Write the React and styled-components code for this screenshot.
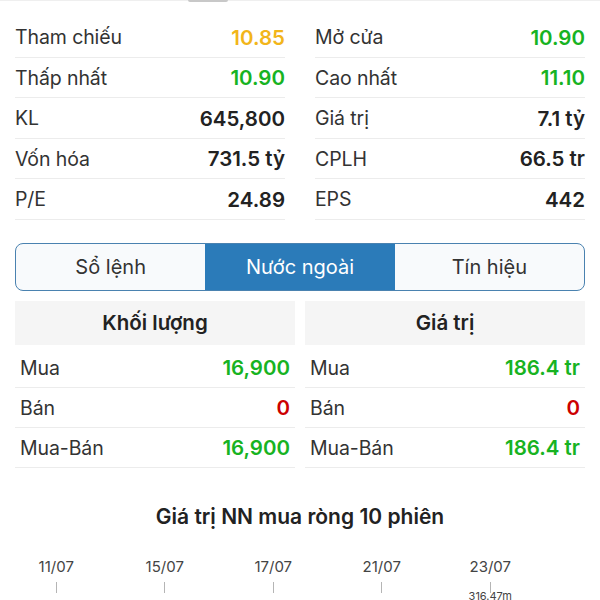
import React from "react";
import styled, { createGlobalStyle } from "styled-components";

const GlobalStyle = createGlobalStyle`
    body {
        margin: 0;
        background: #fff;
        font-family: Inter, "Noto Sans", sans-serif;
        color: #333;
    }
`;

const stats = [
    ["Tham chiếu", "10.85", "ref", "Mở cửa", "10.90", "up"],
    ["Thấp nhất", "10.90", "up", "Cao nhất", "11.10", "up"],
    ["KL", "645,800", "", "Giá trị", "7.1 tỷ", ""],
    ["Vốn hóa", "731.5 tỷ", "", "CPLH", "66.5 tr", ""],
    ["P/E", "24.89", "", "EPS", "442", ""],
];

const tabs = ["Sổ lệnh", "Nước ngoài", "Tín hiệu"];

const foreign = [
    { title: "Khối lượng", rows: [["Mua", "16,900", "up"], ["Bán", "0", "down"], ["Mua-Bán", "16,900", "up"]] },
    { title: "Giá trị", rows: [["Mua", "186.4 tr", "up"], ["Bán", "0", "down"], ["Mua-Bán", "186.4 tr", "up"]] },
];

const dates = ["11/07", "15/07", "17/07", "21/07", "23/07"];

const colors = { ref: "#f2b51a", up: "#17b322", down: "#cc0000", "": "#222" };

const App = () => {
    return (
        <Page>
            <GlobalStyle />
            <TopBar>
                <Handle />
            </TopBar>
            <StatsGrid>
                {stats.map((s, i) => (
                    <React.Fragment key={i}>
                        <StatRow>
                            <Label>{s[0]}</Label>
                            <Value $tone={s[2]}>{s[1]}</Value>
                        </StatRow>
                        <StatRow>
                            <Label>{s[3]}</Label>
                            <Value $tone={s[5]}>{s[4]}</Value>
                        </StatRow>
                    </React.Fragment>
                ))}
            </StatsGrid>
            <Tabs>
                {tabs.map((t, i) => (
                    <Tab key={t} $active={i === 1}>{t}</Tab>
                ))}
            </Tabs>
            <ForeignGrid>
                {foreign.map((f) => (
                    <div key={f.title}>
                        <ForeignHeader>{f.title}</ForeignHeader>
                        {f.rows.map((r) => (
                            <ForeignRow key={r[0]}>
                                <Label>{r[0]}</Label>
                                <Value $tone={r[2]}>{r[1]}</Value>
                            </ForeignRow>
                        ))}
                    </div>
                ))}
            </ForeignGrid>
            <ChartTitle>Giá trị NN mua ròng 10 phiên</ChartTitle>
            <Axis>
                {dates.map((d, i) => (
                    <AxisItem key={d}>
                        <DateLabel>{d}</DateLabel>
                        <Tick />
                        {i === dates.length - 1 && <BarValue>316.47m</BarValue>}
                    </AxisItem>
                ))}
            </Axis>
        </Page>
    );
};

const Page = styled.div`
    width: 600px;
    height: 600px;
    overflow: hidden;
    box-sizing: border-box;
    padding: 0 15px;
    background: #fff;
`;

const TopBar = styled.div`
    height: 16px;
    margin: 0 -15px;
    border-top: 1px solid #efefef;
    padding-left: 188px;
`;

const Handle = styled.div`
    width: 40px;
    height: 2px;
    margin-top: -1px;
    background: #c8c8c8;
    border-radius: 0 0 3px 3px;
`;

const StatsGrid = styled.div`
    display: grid;
    grid-template-columns: 1fr 1fr;
    column-gap: 30px;
`;

const StatRow = styled.div`
    height: 40.5px;
    box-sizing: border-box;
    display: flex;
    align-items: center;
    justify-content: space-between;
    border-bottom: 1px solid #ececec;
    padding-top: 1px;
`;

const Label = styled.span`
    font-size: 19.5px;
    color: #333;
    letter-spacing: -0.1px;
`;

const Value = styled.span`
    font-size: 20.5px;
    font-weight: 600;
    color: ${(p) => colors[p.$tone]};
`;

const Tabs = styled.div`
    margin-top: 23px;
    display: grid;
    grid-template-columns: repeat(3, 1fr);
    height: 48px;
    box-sizing: border-box;
    border: 1.5px solid #4a82b0;
    border-radius: 8px;
    overflow: hidden;
    background: #f8fafc;
`;

const Tab = styled.div`
    display: flex;
    align-items: center;
    justify-content: center;
    font-size: 20px;
    color: ${(p) => (p.$active ? "#fff" : "#333")};
    background: ${(p) => (p.$active ? "#2b7bb9" : "transparent")};
`;

const ForeignGrid = styled.div`
    margin-top: 10px;
    display: grid;
    grid-template-columns: 1fr 1fr;
    column-gap: 10px;
`;

const ForeignHeader = styled.div`
    height: 44px;
    margin-bottom: 3px;
    display: flex;
    align-items: center;
    justify-content: center;
    background: #f5f5f5;
    font-size: 20.5px;
    font-weight: 600;
    color: #222;
`;

const ForeignRow = styled.div`
    height: 40px;
    box-sizing: border-box;
    display: flex;
    align-items: center;
    justify-content: space-between;
    padding: 1px 5px 0;
    border-bottom: 1px solid #ececec;
`;

const ChartTitle = styled.div`
    margin-top: 36px;
    text-align: center;
    font-size: 21px;
    font-weight: 600;
    color: #222;
`;

const Axis = styled.div`
    margin: 28px 0 0 -13px;
    display: grid;
    grid-template-columns: repeat(5, 108.5px);
`;

const AxisItem = styled.div`
    display: flex;
    flex-direction: column;
    align-items: center;
`;

const DateLabel = styled.span`
    font-size: 15px;
    color: #444;
`;

const Tick = styled.div`
    width: 1px;
    height: 11px;
    margin-top: 6px;
    background: #b5b5b5;
`;

const BarValue = styled.span`
    margin-top: -4px;
    font-size: 11px;
    color: #444;
`;

export default App;
